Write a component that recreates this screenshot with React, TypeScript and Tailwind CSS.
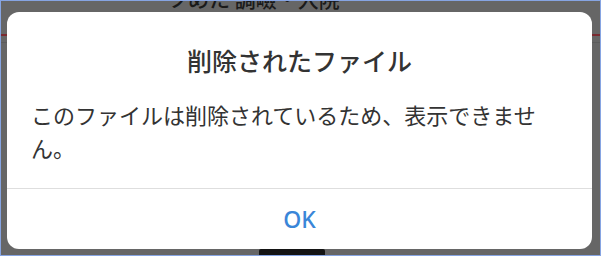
import React from "react";

export default function App() {
  return (
    <div
      className="relative box-border w-[601px] h-[256px] overflow-hidden border border-[#86a4e2] bg-[#666666]"
      style={{ fontFamily: '"Noto Sans", "Noto Sans CJK JP", sans-serif' }}
    >
      {/* dimmed page behind the overlay */}
      <div className="flex flex-col h-full">
        <div className="relative h-[10px] overflow-visible">
          <div className="absolute left-[166px] top-[-17px] text-[21px] leading-[28px] font-medium text-[#1a1a1a] whitespace-nowrap" style={{ fontFamily: '"Noto Sans CJK JP", sans-serif' }}>
            ツめた 調嶮・入院
          </div>
        </div>
        <div className="h-[23px]" />
        <div className="h-[2px] bg-[#7a2a30]" />
        <div className="h-[6px]" />
        <div className="h-[1px] bg-[#5c5c5c]" />
        <div className="flex-1" />
        <div className="flex justify-center">
          <div className="ml-[-17px] w-[66px] h-[6px] bg-[#141414] rounded-t-[2px]" />
        </div>
      </div>

      {/* modal dialog */}
      <div className="absolute inset-0 pl-[6px] pr-[8px] pt-[11px] pb-[6px]">
        <div className="flex flex-col h-full bg-white rounded-[12px] overflow-hidden">
          <div className="pt-[32px] text-center text-[25px] leading-[32px] font-medium text-[#333333]" style={{ fontFamily: '"Noto Sans CJK JP", sans-serif' }}>
            削除されたファイル
          </div>
          <div className="pt-[22px] pl-[24px] pr-[40px] text-[22px] leading-[33px] text-[#333333]" style={{ fontFamily: '"Noto Sans CJK JP", sans-serif' }}>
            このファイルは削除されているため、表示できません。
          </div>
          <div className="h-[24px]" />
          <div className="h-[1px] bg-[#dedede]" />
          <div className="flex-1 flex items-center justify-center text-[23px] font-medium text-[#3a86d8]">
            OK
          </div>
        </div>
      </div>
    </div>
  );
}
